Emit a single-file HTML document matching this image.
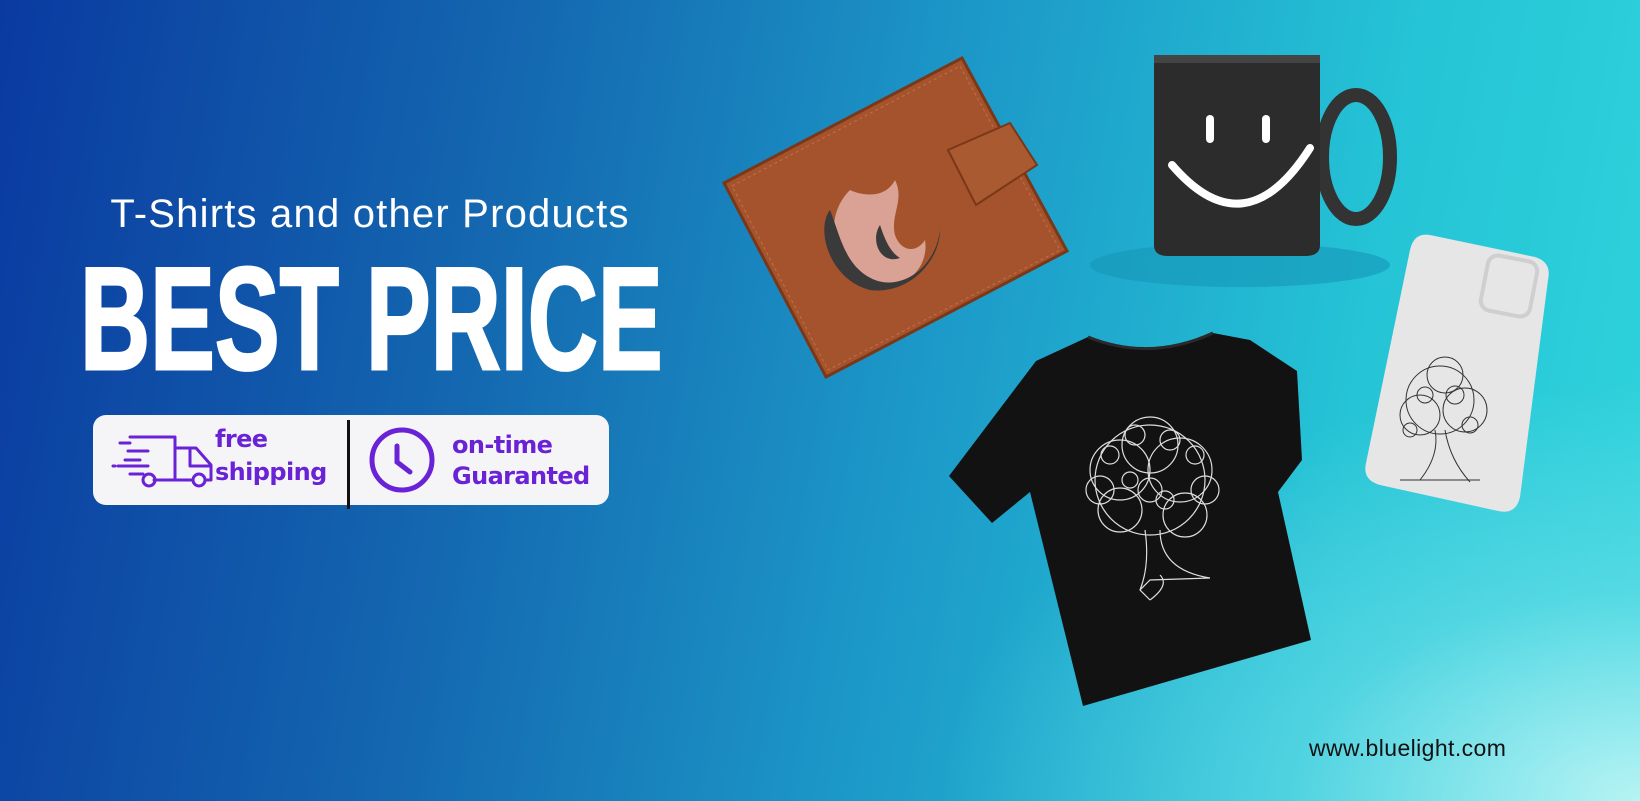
<!DOCTYPE html>
<html><head><meta charset="utf-8"><style>
html,body{margin:0;padding:0}
body{width:1640px;height:801px;overflow:hidden;position:relative;font-family:"Liberation Sans",sans-serif;
background:linear-gradient(100deg,#0a3aa0 0%,#1468b0 30%,#1c98c8 55%,#25c4d6 80%,#2fd4dc 100%);}
.glow{position:absolute;left:0;top:0;width:1640px;height:801px;background:radial-gradient(ellipse 700px 420px at 1640px 801px,rgba(190,245,245,0.95),rgba(120,225,235,0.5) 50%,rgba(40,200,220,0) 100%);}
.sub{position:absolute;left:60px;top:192px;width:620px;text-align:center;color:#fff;font-size:40px;letter-spacing:1.2px;white-space:nowrap}
.big{position:absolute;left:80px;top:246px;color:#fff;font-weight:bold;font-size:146px;line-height:146px;transform:scaleX(0.665);transform-origin:0 0;white-space:nowrap;-webkit-text-stroke:3px #fff}
.box{position:absolute;left:93px;top:415px;width:516px;height:90px;background:#f5f5f7;border-radius:13px}
.div{position:absolute;left:347px;top:420px;width:3px;height:89px;background:#111}
.t{position:absolute;color:#6a22d6;font-weight:bold;font-size:24px;line-height:28px;font-family:"DejaVu Sans","Liberation Sans",sans-serif;letter-spacing:-0.6px}
.url{position:absolute;left:1309px;top:735px;font-size:23px;letter-spacing:0.4px;color:#111}
</style></head><body>
<div class="glow"></div>
<div class="sub">T-Shirts and other Products</div>
<div class="big">BEST PRICE</div>
<div class="box"></div>
<div class="div"></div>
<svg style="position:absolute;left:0;top:0" width="1640" height="801">
 <g fill="none" stroke="#6a22d6" stroke-width="3" stroke-linecap="round" stroke-linejoin="round">
  <path d="M130 437 H175 V480 H154 M175 448 H196 L211 465 V480 H205 M175 480 H193"/>
  <path d="M190 449 V466 H209"/>
  <circle cx="149" cy="480" r="6"/><circle cx="199" cy="480" r="6"/>
  <path d="M120 443 H130 M128 451 H148 M125 460 H140 M113 466 H115 M118 466 H148 M130 474 H143"/>
 </g>
 <g fill="none" stroke="#6a22d6" stroke-width="5" stroke-linecap="round">
  <circle cx="402" cy="460" r="30"/>
  <path d="M397 446 V462 L410 472"/>
 </g>
 <ellipse cx="1240" cy="265" rx="150" ry="22" fill="#1596b8" opacity="0.6"/>
 <polygon points="724,183 962,58 1067,251 826,377" fill="#a4532c" stroke="#7a3818" stroke-width="3"/>
 <polygon points="732,186 960,66 1060,250 828,370" fill="none" stroke="#c27048" stroke-width="1" stroke-dasharray="3 3"/>
 <polygon points="948,150 1010,123 1037,165 976,205" fill="#a95a30" stroke="#7a3818" stroke-width="2"/>
 <path d="M850 190 C820 220 835 270 870 285 C900 295 930 270 925 240 C915 255 900 250 895 235 C890 215 905 200 895 180 C885 200 860 195 850 190Z" fill="#d9a294"/>
 <path d="M830 210 C815 230 830 280 870 290 C910 295 940 260 940 230 C935 270 900 290 875 280 C845 268 840 235 830 210Z" fill="#3a3a3a"/>
 <path d="M880 225 C870 240 880 265 900 258 C890 252 885 240 880 225Z" fill="#3a3a3a"/>
 <ellipse cx="1356" cy="157" rx="34" ry="62" fill="none" stroke="#333" stroke-width="14"/>
 <path d="M1154 60 Q1154 55 1160 55 H1314 Q1320 55 1320 60 V245 Q1320 256 1305 256 H1168 Q1154 256 1154 245Z" fill="#2c2c2c"/>
 <rect x="1154" y="55" width="166" height="8" fill="#444"/>
 <rect x="1206" y="115" width="8" height="28" rx="4" fill="#fff"/>
 <rect x="1262" y="115" width="8" height="28" rx="4" fill="#fff"/>
 <path d="M1172 165 Q1245 250 1310 148" fill="none" stroke="#fff" stroke-width="8" stroke-linecap="round"/>
 <path d="M1430 235 L1535 257 Q1552 262 1548 280 L1520 497 Q1516 515 1498 511 L1380 485 Q1362 480 1366 463 L1410 250 Q1414 232 1430 235Z" fill="#e6e6e6"/>
 <rect x="1484" y="258" width="50" height="56" rx="10" transform="rotate(11 1509 286)" fill="none" stroke="#cfcfcf" stroke-width="4"/>
 <g fill="none" stroke="#333" stroke-width="1">
  <circle cx="1440" cy="400" r="34"/><circle cx="1420" cy="415" r="20"/><circle cx="1465" cy="410" r="22"/><circle cx="1445" cy="375" r="18"/>
  <circle cx="1425" cy="395" r="8"/><circle cx="1455" cy="395" r="9"/><circle cx="1470" cy="425" r="8"/><circle cx="1410" cy="430" r="7"/>
  <path d="M1435 430 Q1440 455 1420 480 M1445 430 Q1450 460 1470 482 M1400 480 H1480"/>
 </g>
 <path d="M1088 337 Q1150 360 1213 333 L1250 340 L1297 371 L1302 460 L1278 492 L1311 640 L1083 706 L1030 492 L992 523 L949 476 L1036 361Z" fill="#121212"/>
 <path d="M1088 337 Q1150 362 1213 333" fill="none" stroke="#2a2a2a" stroke-width="3"/>
 <g fill="none" stroke="#ddd" stroke-width="1.2">
  <circle cx="1150" cy="480" r="55"/><circle cx="1120" cy="470" r="30"/><circle cx="1180" cy="470" r="32"/><circle cx="1150" cy="445" r="28"/>
  <circle cx="1120" cy="510" r="22"/><circle cx="1185" cy="515" r="22"/><circle cx="1100" cy="490" r="14"/><circle cx="1205" cy="490" r="14"/>
  <circle cx="1135" cy="435" r="10"/><circle cx="1170" cy="440" r="10"/><circle cx="1150" cy="490" r="12"/><circle cx="1130" cy="480" r="8"/>
  <circle cx="1165" cy="500" r="9"/><circle cx="1110" cy="455" r="9"/><circle cx="1195" cy="455" r="9"/>
  <path d="M1145 530 Q1150 565 1140 590 L1150 600 M1160 530 Q1160 570 1210 578 M1140 590 L1150 580 L1210 578 M1150 600 Q1170 585 1160 575"/>
 </g>
</svg>
<div class="t" style="left:215px;top:425px">free</div>
<div class="t" style="left:215px;top:458px">shipping</div>
<div class="t" style="left:452px;top:431px">on-time</div>
<div class="t" style="left:452px;top:462px">Guaranted</div>
<div class="url">www.bluelight.com</div>
</body></html>
